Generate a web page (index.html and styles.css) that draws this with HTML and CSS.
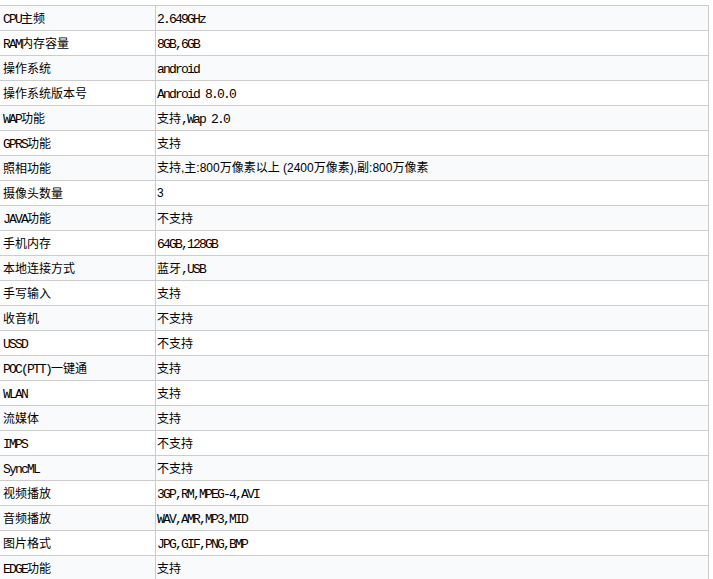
FILE: index.html
```html
<!DOCTYPE html>
<html lang="zh">
<head>
<meta charset="utf-8">
<title>参数</title>
<link rel="stylesheet" href="styles.css">
</head>
<body>
<div class="spec">
  <div class="row"><div class="k"><span class="m">CPU</span>主频</div><div class="v"><span class="m">2.649GHz</span></div></div>
  <div class="row"><div class="k"><span class="m">RAM</span>内存容量</div><div class="v"><span class="m">8GB,6GB</span></div></div>
  <div class="row"><div class="k">操作系统</div><div class="v"><span class="m">android</span></div></div>
  <div class="row"><div class="k">操作系统版本号</div><div class="v"><span class="m">Android 8.0.0</span></div></div>
  <div class="row"><div class="k"><span class="m">WAP</span>功能</div><div class="v">支持<span class="m">,Wap 2.0</span></div></div>
  <div class="row"><div class="k"><span class="m">GPRS</span>功能</div><div class="v">支持</div></div>
  <div class="row"><div class="k">照相功能</div><div class="v s">支持,主:800万像素以上 (2400万像素),副:800万像素</div></div>
  <div class="row"><div class="k">摄像头数量</div><div class="v s">3</div></div>
  <div class="row"><div class="k"><span class="m">JAVA</span>功能</div><div class="v">不支持</div></div>
  <div class="row"><div class="k">手机内存</div><div class="v"><span class="m">64GB,128GB</span></div></div>
  <div class="row"><div class="k">本地连接方式</div><div class="v">蓝牙<span class="m">,USB</span></div></div>
  <div class="row"><div class="k">手写输入</div><div class="v">支持</div></div>
  <div class="row"><div class="k">收音机</div><div class="v">不支持</div></div>
  <div class="row"><div class="k"><span class="m">USSD</span></div><div class="v">不支持</div></div>
  <div class="row"><div class="k"><span class="m">POC(PTT)</span>一键通</div><div class="v">支持</div></div>
  <div class="row"><div class="k"><span class="m">WLAN</span></div><div class="v">支持</div></div>
  <div class="row"><div class="k">流媒体</div><div class="v">支持</div></div>
  <div class="row"><div class="k"><span class="m">IMPS</span></div><div class="v">不支持</div></div>
  <div class="row"><div class="k"><span class="m">SyncML</span></div><div class="v">不支持</div></div>
  <div class="row"><div class="k">视频播放</div><div class="v"><span class="m">3GP,RM,MPEG-4,AVI</span></div></div>
  <div class="row"><div class="k">音频播放</div><div class="v"><span class="m">WAV,AMR,MP3,MID</span></div></div>
  <div class="row"><div class="k">图片格式</div><div class="v"><span class="m">JPG,GIF,PNG,BMP</span></div></div>
  <div class="row"><div class="k"><span class="m">EDGE</span>功能</div><div class="v">支持</div></div>
</div>
</body>
</html>
```

FILE: styles.css
```css
html, body {
  margin: 0;
  padding: 0;
  background: #ffffff;
}

body {
  font-family: "Noto Sans CJK SC", sans-serif;
  font-size: 12px;
  color: #000000;
}

.spec {
  margin-top: 5px;
  width: 709px;
  border-top: 1px solid #cccccc;
}

.row {
  display: grid;
  grid-template-columns: 156px 553px;
  height: 25px;
}

.row:nth-child(odd) {
  background: #f9fafc;
}

.k,
.v {
  box-sizing: border-box;
  height: 25px;
  line-height: 24px;
  border-bottom: 1px solid #cccccc;
  border-right: 1px solid #cccccc;
  white-space: nowrap;
  overflow: hidden;
}

.k {
  padding-left: 3px;
}

.v {
  padding-left: 1px;
}

.m {
  font-family: "Liberation Mono", monospace;
  font-size: 13px;
  letter-spacing: -1.8px;
}

.s {
  font-family: "Liberation Sans", "Noto Sans CJK SC", sans-serif;
}
```
